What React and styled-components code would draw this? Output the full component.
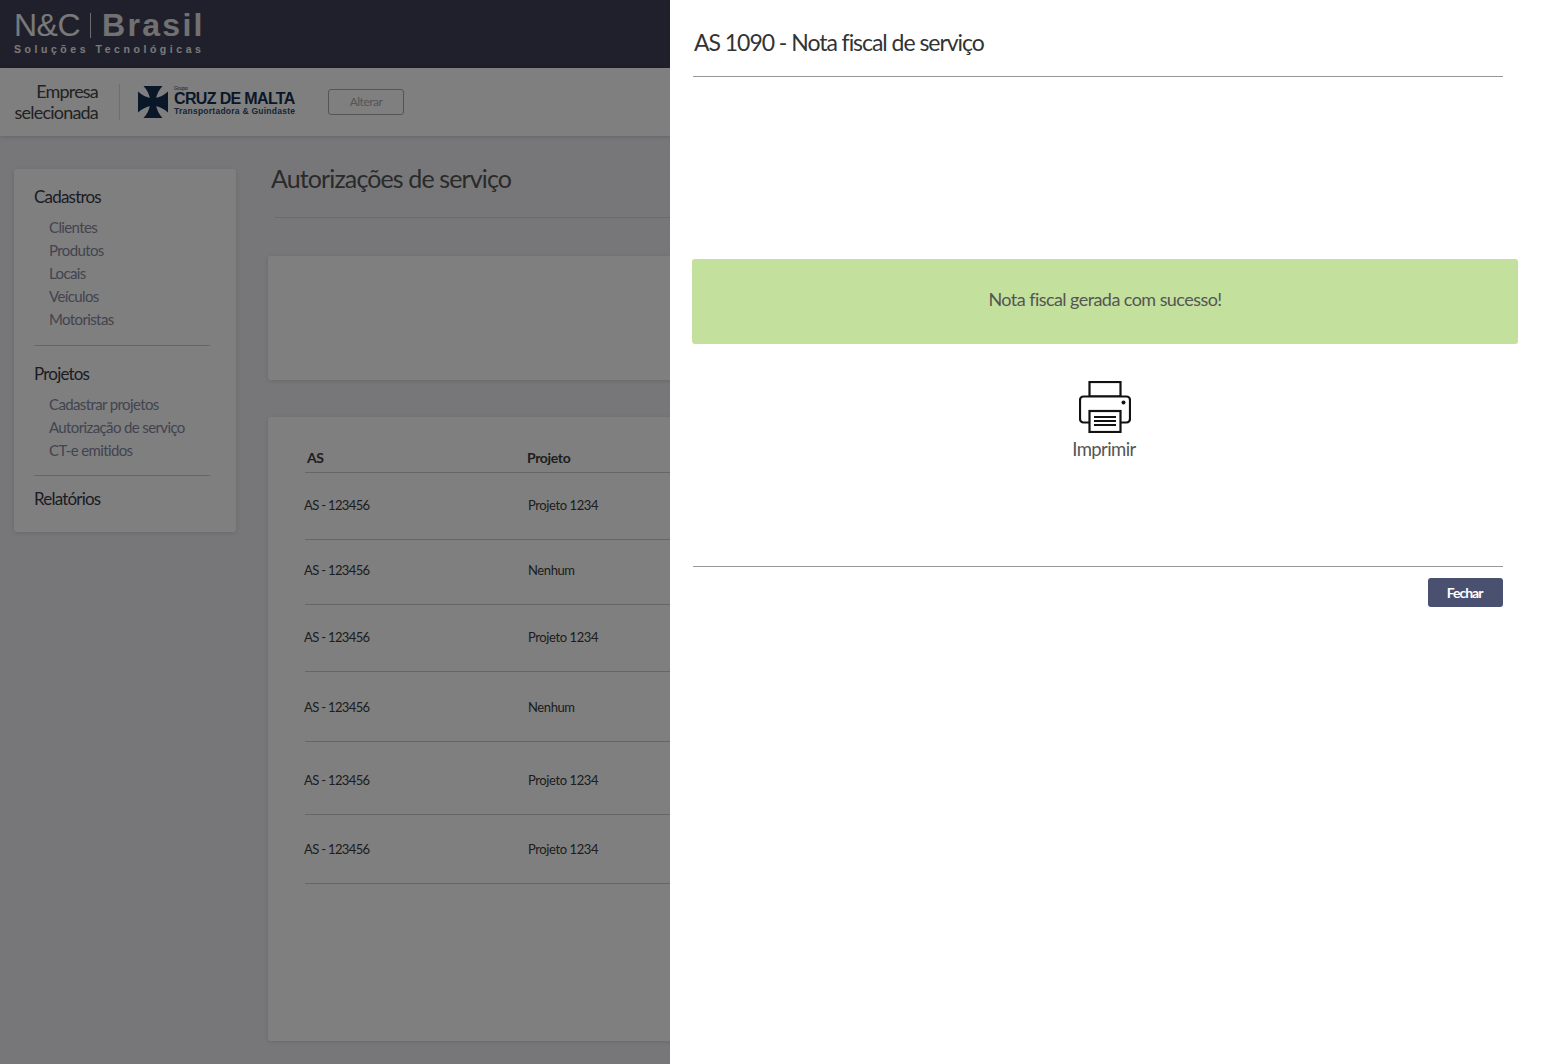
import React from 'react'
import styled, { createGlobalStyle } from 'styled-components'

const GlobalStyle = createGlobalStyle`
    * {
        box-sizing: border-box;
    }
    html, body {
        margin: 0;
        height: 100%;
        overflow: hidden;
    }
    body {
        font-family: Lato, "Open Sans", "Liberation Sans", sans-serif;
        background: #eeeef2;
    }
`

const menu = [
    { title: 'Cadastros', items: ['Clientes', 'Produtos', 'Locais', 'Veículos', 'Motoristas'], pb: 14, mb: 16 },
    { title: 'Projetos', items: ['Cadastrar projetos', 'Autorização de serviço', 'CT-e emitidos'], pb: 13, mb: 11 },
    { title: 'Relatórios', items: [], pb: 0, mb: 0 },
]

// shift moves the text off the middle of the row
const rows = [
    { as: 'AS - 123456', projeto: 'Projeto 1234', h: 67, shift: -1 },
    { as: 'AS - 123456', projeto: 'Nenhum', h: 65, shift: -2 },
    { as: 'AS - 123456', projeto: 'Projeto 1234', h: 67, shift: -1 },
    { as: 'AS - 123456', projeto: 'Nenhum', h: 70, shift: 0 },
    { as: 'AS - 123456', projeto: 'Projeto 1234', h: 73, shift: 2 },
    { as: 'AS - 123456', projeto: 'Projeto 1234', h: 69, shift: 0 },
]

const PrinterIcon = () => (
    <svg width="52" height="52" viewBox="0 0 52 52" fill="none" stroke="#111" strokeWidth="2.2">
        <rect x="10.5" y="1" width="31" height="14.5" fill="#fff" />
        <rect x="1" y="15.5" width="50" height="26" rx="3.5" fill="#fff" />
        <rect x="10.5" y="30" width="31" height="21" fill="#fff" />
        <path d="M15 36h22M15 40h22M15 44h22" strokeWidth="1.8" />
        <circle cx="44.5" cy="21.5" r="2" fill="#111" stroke="none" />
    </svg>
)

const MaltaCross = () => (
    <svg width="30" height="32" viewBox="0 0 30 32" fill="#142f52">
        <path d="M5.5 0H24.5Q19 6 18 13H12Q11 6 5.5 0Z" />
        <path d="M5.5 32H24.5Q19 26 18 19H12Q11 26 5.5 32Z" />
        <path d="M0 5.5Q6 11 13 12V20Q6 21 0 26.5Z" />
        <path d="M30 5.5Q24 11 17 12V20Q24 21 30 26.5Z" />
        <rect x="12" y="12" width="6" height="8" />
    </svg>
)

const App = () => (
    <>
        <GlobalStyle />
        <Page>
            <TopBar>
                <Logo>
                    <LogoName>
                        <LogoNC>N&amp;C</LogoNC>
                        <LogoBar />
                        <LogoBrasil>Brasil</LogoBrasil>
                    </LogoName>
                    <LogoTag>Soluções Tecnológicas</LogoTag>
                </Logo>
            </TopBar>
            <CompanyBar>
                <CompanyLabel>Empresa<br />selecionada</CompanyLabel>
                <CompanyDivider />
                <CompanyLogo>
                    <MaltaCross />
                    <CompanyText>
                        <CompanyGroup>Grupo</CompanyGroup>
                        <CompanyName>CRUZ DE MALTA</CompanyName>
                        <CompanySub>Transportadora &amp; Guindaste</CompanySub>
                    </CompanyText>
                </CompanyLogo>
                <ChangeButton>Alterar</ChangeButton>
            </CompanyBar>
            <Main>
                <Sidebar>
                    {menu.map((group, i) => (
                        <MenuGroup key={group.title} $pb={group.pb} $mb={group.mb} $last={i === menu.length - 1}>
                            <MenuTitle>{group.title}</MenuTitle>
                            {group.items.map(item => <MenuItem key={item}>{item}</MenuItem>)}
                        </MenuGroup>
                    ))}
                </Sidebar>
                <Content>
                    <PageTitle>Autorizações de serviço</PageTitle>
                    <FilterCard />
                    <TableCard>
                        <HeadRow>
                            <HeadAs>AS</HeadAs>
                            <HeadProjeto>Projeto</HeadProjeto>
                        </HeadRow>
                        {rows.map((row, i) => (
                            <Row key={i} $h={row.h} $shift={row.shift}>
                                <CellAs>{row.as}</CellAs>
                                <CellProjeto>{row.projeto}</CellProjeto>
                            </Row>
                        ))}
                    </TableCard>
                </Content>
            </Main>
            <Overlay />
            <Modal>
                <ModalTitle>AS 1090 - Nota fiscal de serviço</ModalTitle>
                <ModalBody>
                    <SuccessBox>Nota fiscal gerada com sucesso!</SuccessBox>
                    <PrintAction>
                        <PrinterIcon />
                        <PrintLabel>Imprimir</PrintLabel>
                    </PrintAction>
                </ModalBody>
                <ModalFooter>
                    <CloseButton>Fechar</CloseButton>
                </ModalFooter>
            </Modal>
        </Page>
    </>
)

const Page = styled.div`
    position: relative;
    width: 1547px;
    height: 1064px;
    overflow: hidden;
    letter-spacing: -0.035em;
`

const TopBar = styled.header`
    height: 68px;
    padding: 10px 0 0 14px;
    background: #3e4058;
`

const Logo = styled.div`
    display: inline-flex;
    flex-direction: column;
    color: #f2f2f2;
    font-family: "Liberation Sans", sans-serif;
`

const LogoName = styled.div`
    display: flex;
    align-items: center;
    height: 30px;
`

const LogoNC = styled.span`
    font-size: 32px;
    letter-spacing: -0.5px;
`

const LogoBar = styled.span`
    width: 1px;
    height: 25px;
    margin: 0 11px 0 10px;
    background: #d8d8d8;
`

const LogoBrasil = styled.span`
    font-size: 32px;
    font-weight: bold;
    letter-spacing: 2.3px;
    color: #e2e2e2;
`

const LogoTag = styled.div`
    margin-top: 3px;
    font-size: 10.5px;
    font-weight: bold;
    letter-spacing: 3.55px;
    white-space: nowrap;
`

const CompanyBar = styled.div`
    position: relative;
    display: flex;
    align-items: center;
    height: 68px;
    background: #fff;
    box-shadow: 0 1px 4px rgba(0, 0, 0, 0.15);
`

const CompanyLabel = styled.div`
    width: 99px;
    padding-right: 1px;
    font-size: 18px;
    line-height: 21px;
    letter-spacing: -0.8px;
    text-align: right;
    color: #444;
`

const CompanyDivider = styled.div`
    width: 1px;
    height: 36px;
    margin: 0 18px 0 20px;
    background: #ddd;
`

const CompanyLogo = styled.div`
    display: flex;
    align-items: center;
    gap: 6px;
    width: 190px;
`

const CompanyText = styled.div`
    display: flex;
    flex-direction: column;
    margin-top: -2px;
    font-family: "Liberation Sans", sans-serif;
    color: #142f52;
    letter-spacing: 0;
`

const CompanyGroup = styled.span`
    font-size: 5px;
    line-height: 5px;
`

const CompanyName = styled.span`
    font-size: 16px;
    line-height: 16px;
    font-weight: bold;
    letter-spacing: -0.65px;
    white-space: nowrap;
`

const CompanySub = styled.span`
    font-size: 8.5px;
    line-height: 9px;
    font-weight: bold;
    letter-spacing: 0.25px;
    color: #2c4a6e;
    white-space: nowrap;
`

const ChangeButton = styled.button`
    width: 76px;
    height: 26px;
    padding: 0 0 2px;
    border: 1px solid #aaa;
    border-radius: 3px;
    background: #fff;
    color: #aaa;
    font-family: inherit;
    font-size: 12px;
    letter-spacing: -0.5px;
`

const Main = styled.div`
    display: flex;
    align-items: flex-start;
    padding: 33px 0 0 14px;
`

const Sidebar = styled.nav`
    flex: none;
    width: 222px;
    height: 363px;
    padding: 16px 26px 0 20px;
    border-radius: 3px;
    background: #fff;
    box-shadow: 0 1px 4px rgba(0, 0, 0, 0.12);
`

const MenuGroup = styled.div`
    display: flex;
    flex-direction: column;
    padding-bottom: ${p => p.$pb}px;
    margin-bottom: ${p => p.$mb}px;
    border-bottom: ${p => (p.$last ? 'none' : '1px solid #ccc')};
`

const MenuTitle = styled.div`
    height: 23px;
    margin-bottom: 8px;
    font-size: 17px;
    line-height: 23px;
    letter-spacing: -0.8px;
    color: #383946;
`

const MenuItem = styled.a`
    height: 23px;
    padding-left: 15px;
    font-size: 15px;
    line-height: 23px;
    letter-spacing: -0.62px;
    color: #86889f;
`

const Content = styled.div`
    flex: none;
    width: 1240px;
    margin-left: 32px;
`

const PageTitle = styled.h1`
    height: 49px;
    margin: 0 0 38px 7px;
    border-bottom: 1px solid #d4d4d4;
    font-size: 25px;
    line-height: 18px;
    font-weight: 400;
    letter-spacing: -0.88px;
    text-indent: -4px;
    color: #555;
`

const FilterCard = styled.div`
    height: 124px;
    margin-bottom: 37px;
    border-radius: 3px;
    background: #fff;
    box-shadow: 0 1px 4px rgba(0, 0, 0, 0.12);
`

const TableCard = styled.div`
    height: 624px;
    padding: 28px 0 0 37px;
    border-radius: 3px;
    background: #fff;
    box-shadow: 0 1px 4px rgba(0, 0, 0, 0.12);
`

const HeadRow = styled.div`
    display: flex;
    align-items: center;
    height: 28px;
    padding-bottom: 2px;
    border-bottom: 1px solid #ccc;
    font-size: 14px;
    font-weight: 700;
    letter-spacing: -0.35px;
    color: #3c3c3c;
`

const HeadAs = styled.div`
    width: 222px;
    padding-left: 2px;
`

const HeadProjeto = styled.div`
    width: 240px;
`

const Row = styled.div`
    display: flex;
    align-items: center;
    height: ${p => p.$h}px;
    padding-top: ${p => Math.max(p.$shift * 2, 0)}px;
    padding-bottom: ${p => Math.max(-p.$shift * 2, 0)}px;
    border-bottom: 1px solid #ccc;
    font-size: 13px;
    color: #3a3a3a;
`

const CellAs = styled.div`
    width: 224px;
    margin-left: -1px;
    letter-spacing: -0.65px;
`

const CellProjeto = styled.div`
    width: 240px;
    letter-spacing: -0.4px;
`

const Overlay = styled.div`
    position: absolute;
    inset: 0;
    background: rgba(0, 0, 0, 0.5);
`

const Modal = styled.aside`
    position: absolute;
    top: 0;
    right: 0;
    bottom: 0;
    display: flex;
    flex-direction: column;
    width: 877px;
    padding: 0 44px 0 23px;
    background: #fff;
`

const ModalTitle = styled.h2`
    height: 77px;
    margin: 0;
    padding: 27px 0 0 1px;
    border-bottom: 1px solid #999;
    font-size: 23px;
    line-height: 31px;
    font-weight: 400;
    letter-spacing: -1.04px;
    color: #333;
`

const ModalBody = styled.div`
    display: flex;
    flex-direction: column;
    align-items: center;
    height: 490px;
    padding-top: 182px;
    border-bottom: 1px solid #999;
`

const SuccessBox = styled.div`
    flex: none;
    width: 826px;
    height: 85px;
    margin: 0 -15px 0 -1px;
    padding-top: 26px;
    border-radius: 3px;
    background: #c3e09d;
    color: #555;
    font-size: 18px;
    line-height: 28px;
    text-align: center;
`

const PrintAction = styled.div`
    display: flex;
    flex-direction: column;
    align-items: center;
    margin: 37px 0 0 14px;
`

const PrintLabel = styled.div`
    margin: 2px 2px 0 0;
    font-size: 18.5px;
    line-height: 28px;
    letter-spacing: -0.6px;
    color: #555;
`

const ModalFooter = styled.div`
    display: flex;
    justify-content: flex-end;
    padding-top: 11px;
`

const CloseButton = styled.button`
    width: 75px;
    height: 29px;
    padding: 0 2px 0 0;
    border: none;
    border-radius: 3px;
    background: #4a5070;
    color: #fff;
    font-family: inherit;
    font-size: 14px;
    font-weight: 700;
    letter-spacing: -1px;
`

export default App
